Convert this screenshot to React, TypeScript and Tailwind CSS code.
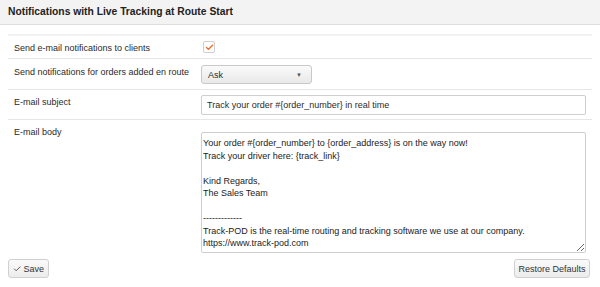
import { Check } from "lucide-react";

const body = `Your order #{order_number} to {order_address} is on the way now!
Track your driver here: {track_link}

Kind Regards,
The Sales Team

-------------
Track-POD is the real-time routing and tracking software we use at our company.
https://www.track-pod.com`;

export default function App() {
  return (
    <div className="w-[600px] h-[287px] bg-white text-[#2a2a2a] text-[9px] leading-[12px] font-['Liberation_Sans',Arial,sans-serif] overflow-hidden">
      <div className="h-[25px] bg-[#f3f3f3] border-b border-[#dedede] flex items-center px-2">
        <h2 className="font-bold text-[10.3px] text-[#222]">Notifications with Live Tracking at Route Start</h2>
      </div>

      <div className="mx-2 mt-[9px] border-t-2 border-[#f2f2f2]">
        <div className="flex h-[23px] border-b border-[#e6e6e6]">
          <div className="w-[193px] pl-[6px] pt-[6px]">Send e-mail notifications to clients</div>
          <div className="pt-[5px] pl-[2px]">
            <span className="w-[12px] h-[12px] rounded-[2px] border border-[#cfcfcf] bg-white flex items-center justify-center">
              <Check className="w-[9px] h-[9px] text-[#f26522]" strokeWidth={3.5} />
            </span>
          </div>
        </div>

        <div className="flex h-[31px] border-b border-[#e6e6e6]">
          <div className="w-[193px] pl-[6px] pt-[7px]">Send notifications for orders added en route</div>
          <div className="pt-[6px]">
            <div className="w-[111px] h-[19px] rounded-[3px] border border-[#c9c9c9] bg-gradient-to-b from-[#fafafa] to-[#e9e9e9] flex items-center justify-between px-[6px]">
              <span>Ask</span>
              <span className="text-[6px] text-[#555] mr-[3px]">▼</span>
            </div>
          </div>
        </div>

        <div className="flex h-[30px] border-b border-[#e6e6e6]">
          <div className="w-[193px] pl-[6px] pt-[6px]">E-mail subject</div>
          <div className="pt-[5px]">
            <div className="w-[385px] h-[20px] border border-[#cfcfcf] rounded-[2px] flex items-center px-[5px]">
              Track your order #{"{order_number}"} in real time
            </div>
          </div>
        </div>

        <div className="flex h-[135px]">
          <div className="w-[193px] pl-[6px] pt-[6px]">E-mail body</div>
          <div className="pt-[12px]">
            <textarea
              readOnly
              value={body}
              className="w-[385px] h-[121px] border border-[#cfcfcf] rounded-[2px] px-[1px] pt-[4px] leading-[12.5px] resize-y outline-none text-[#222]"
            />
          </div>
        </div>
      </div>

      <div className="flex justify-between px-2 mt-[4px]">
        <button className="h-[19px] w-[41px] px-[4px] flex items-center gap-[2px] rounded-[3px] border border-[#d0d0d0] bg-gradient-to-b from-[#fafafa] to-[#ececec] text-[#333]">
          <Check className="w-[10px] h-[10px] text-[#333]" strokeWidth={2.25} />
          Save
        </button>
        <button className="h-[19px] w-[76px] mr-[2px] rounded-[3px] border border-[#d0d0d0] bg-gradient-to-b from-[#fafafa] to-[#ececec] text-[#333]">
          Restore Defaults
        </button>
      </div>
    </div>
  );
}
